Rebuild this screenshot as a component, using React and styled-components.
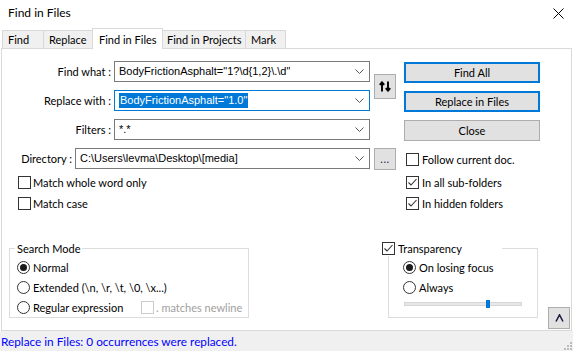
import React from 'react';
import styled, { createGlobalStyle } from 'styled-components';

const UI_FONT = `"Segoe UI", Lato, "Noto Sans", sans-serif`;
const EDIT_FONT = `"Segoe UI", "Liberation Sans", Arial, sans-serif`;

const GlobalStyle = createGlobalStyle`
  html, body { margin: 0; padding: 0; background: #fff; }
  body { font-family: ${UI_FONT}; font-size: 11px; color: #000; }
  * { box-sizing: border-box; }
`;

const Window = styled.div`
  width: 573px;
  height: 351px;
  display: flex;
  flex-direction: column;
  overflow: hidden;
  background: #fff;
`;

const TitleBar = styled.div`
  height: 28px;
  flex: none;
  display: flex;
  align-items: center;
  justify-content: space-between;
  padding: 0 9px 2px 8px;
`;

const TitleText = styled.span`
  font-size: 12px;
  line-height: 16px;
`;

const TabStrip = styled.div`
  height: 21px;
  flex: none;
  display: flex;
  align-items: flex-end;
  padding-left: 2px;
  margin-bottom: -1px;
  position: relative;
  z-index: 1;
`;

const Tab = styled.div`
  width: ${p => p.$w}px;
  height: ${p => (p.$active ? 21 : 18)}px;
  margin-bottom: ${p => (p.$active ? 0 : 1)}px;
  margin-right: -1px;
  padding-left: ${p => p.$pad}px;
  border: 1px solid #d9d9d9;
  border-bottom: none;
  background: ${p => (p.$active ? '#fff' : '#f0f0f0')};
  display: flex;
  align-items: center;
  white-space: nowrap;
  position: relative;
  z-index: ${p => (p.$active ? 1 : 0)};
`;

const Panel = styled.div`
  margin-left: 1px;
  width: 571px;
  height: 283px;
  flex: none;
  border: 1px solid #d9d9d9;
  background: #fff;
  display: flex;
  flex-direction: column;
  padding: 12px 1px 1px 7px;
`;

const TopGrid = styled.div`
  display: grid;
  grid-template-columns: 361px 26px 144px;
  grid-template-rows: repeat(4, 22px);
  row-gap: 7px;
  justify-items: end;
`;

const FormRow = styled.div`
  grid-column: 1;
  grid-row: ${p => p.$row};
  display: flex;
  justify-content: flex-end;
  align-items: flex-start;
  gap: 3px;
  justify-self: stretch;
`;

const FieldLabel = styled.label`
  line-height: 21px;
  white-space: nowrap;
`;

const Combo = styled.div`
  width: ${p => p.$w}px;
  height: 21px;
  border: 1px solid ${p => (p.$focused ? '#0078d7' : '#7a7a7a')};
  background: #fff;
  display: flex;
  align-items: center;
  justify-content: space-between;
  padding: 0 5px 0 4px;
`;

const ComboText = styled.span`
  font-family: ${EDIT_FONT};
  font-size: 11px;
  white-space: nowrap;
  overflow: hidden;
  line-height: 15px;
`;

const Selected = styled.span`
  display: inline-block;
  background: #0078d7;
  color: #fff;
  line-height: 15px;
  padding: 0 1px;
`;

const SideButton = styled.div`
  grid-column: 2;
  width: 22px;
  background: #e1e1e1;
  border: 1px solid #adadad;
  display: flex;
  align-items: center;
  justify-content: center;
`;

const SwapButton = styled(SideButton)`
  grid-row: 1 / span 2;
  align-self: center;
  height: 25px;
`;

const EllipsisButton = styled(SideButton)`
  grid-row: 4;
  align-self: start;
  height: 22px;
  line-height: 14px;
  padding-bottom: 1px;
  letter-spacing: 0.5px;
  color: #1a1a60;
`;

const ActionButton = styled.div`
  grid-column: 3;
  grid-row: ${p => p.$row};
  align-self: end;
  width: 136px;
  height: 21px;
  background: #e1e1e1;
  border: ${p => (p.$default ? '2px solid #0078d7' : '1px solid #adadad')};
  display: flex;
  align-items: center;
  justify-content: center;
  white-space: nowrap;
`;

const FollowCell = styled.div`
  grid-column: 3;
  grid-row: 4;
  align-self: center;
  justify-self: stretch;
  padding-left: 10px;
`;

const CheckArea = styled.div`
  display: grid;
  grid-template-columns: 397px 1fr;
  margin-top: 2px;
`;

const CheckColumn = styled.div`
  display: flex;
  flex-direction: column;
  padding-left: ${p => p.$pl}px;
`;

const CheckRow = styled.div`
  height: ${p => p.$h || 21}px;
  display: flex;
  align-items: center;
  gap: ${p => p.$gap ?? 3}px;
  white-space: nowrap;
  color: ${p => (p.$disabled ? '#a0a0a0' : '#000')};
  width: ${p => (p.$w ? `${p.$w}px` : 'auto')};
  flex: none;
`;

const Box = styled.span`
  width: 13px;
  height: 13px;
  flex: none;
  border: 1px solid ${p => (p.$disabled ? '#cccccc' : '#333333')};
  background: #fff;
  display: flex;
  align-items: center;
  justify-content: center;
`;

const Circle = styled.span`
  width: 13px;
  height: 13px;
  flex: none;
  border-radius: 50%;
  border: 1px solid #333333;
  background: #fff;
  display: flex;
  align-items: center;
  justify-content: center;
  &::after {
    content: '';
    display: ${p => (p.$on ? 'block' : 'none')};
    width: 7px;
    height: 7px;
    border-radius: 50%;
    background: #1a1a1a;
  }
`;

const BottomArea = styled.div`
  margin-top: auto;
  display: flex;
  align-items: flex-end;
`;

const GroupBox = styled.div`
  position: relative;
  width: ${p => p.$w}px;
  height: 70px;
  margin-left: ${p => p.$ml}px;
  margin-bottom: 11px;
  border: 1px solid #dcdcdc;
  padding: 9px 0 0 ${p => p.$pl}px;
  display: flex;
  flex-direction: column;
  gap: 1px;
`;

const GroupTitle = styled.div`
  position: absolute;
  top: -9px;
  left: ${p => p.$left}px;
  width: ${p => (p.$w ? `${p.$w}px` : 'auto')};
  height: 16px;
  padding: 0 ${p => p.$pad}px;
  background: #fff;
  display: flex;
  align-items: center;
  gap: 3px;
  white-space: nowrap;
`;

const OptionRow = styled.div`
  height: 19px;
  display: flex;
  align-items: center;
`;

const SliderRow = styled.div`
  height: 12px;
  display: flex;
  align-items: center;
  padding-left: 1px;
`;

const SliderTrack = styled.div`
  position: relative;
  width: 118px;
  height: 4px;
  background: #e7e7e7;
  border: 1px solid #d6d6d6;
`;

const SliderThumb = styled.div`
  position: absolute;
  top: -3px;
  width: 4px;
  height: 8px;
  background: #0078d7;
`;

const CollapseButton = styled.div`
  width: 22px;
  height: 22px;
  margin-left: 10px;
  background: #e1e1e1;
  border: 1px solid #adadad;
  display: flex;
  align-items: center;
  justify-content: center;
`;

const StatusBar = styled.div`
  height: 20px;
  flex: none;
  background: #f0f0f0;
  display: flex;
  align-items: center;
  justify-content: space-between;
  padding-left: 1px;
  color: #0000ff;
  font-size: 11.8px;
  white-space: nowrap;
`;

const Grip = styled.svg`
  align-self: flex-end;
  margin: 0 1px 1px 0;
`;

const Chevron = () => (
  <svg width="9" height="5" viewBox="0 0 9 5" style={{ flex: 'none' }}>
    <polyline points="0.5,0.5 4.5,4.5 8.5,0.5" fill="none" stroke="#555" strokeWidth="1" />
  </svg>
);

const Check = () => (
  <svg width="11" height="11" viewBox="0 0 11 11">
    <polyline points="1.5,5.5 4,8 9.5,2" fill="none" stroke="#333" strokeWidth="1.1" />
  </svg>
);

const Checkbox = ({ checked, disabled, label, gap }) => (
  <CheckRow $disabled={disabled} $gap={gap}>
    <Box $disabled={disabled}>{checked && <Check />}</Box>
    <span>{label}</span>
  </CheckRow>
);

const Radio = ({ on, label, width }) => (
  <CheckRow $h={19} $gap={3} $w={width}>
    <Circle $on={on} />
    <span>{label}</span>
  </CheckRow>
);

export default function App() {
  return (
    <>
      <GlobalStyle />
      <Window>
        <TitleBar>
          <TitleText>Find in Files</TitleText>
          <svg width="11" height="11" viewBox="0 0 11 11">
            <path d="M0.5 0.5 L10.5 10.5 M10.5 0.5 L0.5 10.5" stroke="#000" strokeWidth="1" />
          </svg>
        </TitleBar>

        <TabStrip>
          <Tab $w={42} $pad={5}>Find</Tab>
          <Tab $w={50} $pad={5}>Replace</Tab>
          <Tab $w={71} $pad={6} $active>Find in Files</Tab>
          <Tab $w={84} $pad={4}>Find in Projects</Tab>
          <Tab $w={41} $pad={5}>Mark</Tab>
        </TabStrip>

        <Panel>
          <TopGrid>
            <FormRow $row={1}>
              <FieldLabel>Find what :</FieldLabel>
              <Combo $w={256}>
                <ComboText>{'BodyFrictionAsphalt="1?\\d{1,2}\\.\\d"'}</ComboText>
                <Chevron />
              </Combo>
            </FormRow>
            <FormRow $row={2}>
              <FieldLabel>Replace with :</FieldLabel>
              <Combo $w={256} $focused>
                <ComboText>
                  <Selected>BodyFrictionAsphalt="1.0"</Selected>
                </ComboText>
                <Chevron />
              </Combo>
            </FormRow>
            <FormRow $row={3}>
              <FieldLabel>Filters :</FieldLabel>
              <Combo $w={256}>
                <ComboText>*.*</ComboText>
                <Chevron />
              </Combo>
            </FormRow>
            <FormRow $row={4}>
              <FieldLabel>Directory :</FieldLabel>
              <Combo $w={295}>
                <ComboText>{'C:\\Users\\levma\\Desktop\\[media]'}</ComboText>
                <Chevron />
              </Combo>
            </FormRow>

            <SwapButton>
              <svg width="12" height="11" viewBox="0 0 12 11">
                <path d="M3 10.5 V1.5 M0.8 3.8 L3 1.3 L5.2 3.8" fill="none" stroke="#000" strokeWidth="1.9" />
                <path d="M9 0.5 V9.5 M6.8 7.2 L9 9.7 L11.2 7.2" fill="none" stroke="#000" strokeWidth="1.9" />
              </svg>
            </SwapButton>
            <EllipsisButton>...</EllipsisButton>

            <ActionButton $row={1} $default>Find All</ActionButton>
            <ActionButton $row={2} $default>Replace in Files</ActionButton>
            <ActionButton $row={3}>Close</ActionButton>
            <FollowCell>
              <Checkbox label="Follow current doc." />
            </FollowCell>
          </TopGrid>

          <CheckArea>
            <CheckColumn $pl={9}>
              <Checkbox label="Match whole word only" gap={2} />
              <Checkbox label="Match case" gap={2} />
            </CheckColumn>
            <CheckColumn $pl={0}>
              <Checkbox label="In all sub-folders" checked />
              <Checkbox label="In hidden folders" checked />
            </CheckColumn>
          </CheckArea>

          <BottomArea>
            <GroupBox $w={240} $ml={0} $pl={7}>
              <GroupTitle $left={5} $pad={2}>Search Mode</GroupTitle>
              <OptionRow>
                <Radio on label="Normal" />
              </OptionRow>
              <OptionRow>
                <Radio label={'Extended (\\n, \\r, \\t, \\0, \\x...)'} />
              </OptionRow>
              <OptionRow>
                <Radio label="Regular expression" width={124} />
                <Checkbox label=". matches newline" disabled gap={2} />
              </OptionRow>
            </GroupBox>

            <GroupBox $w={150} $ml={139} $pl={14}>
              <GroupTitle $left={-7} $pad={0} $w={120}>
                <Box><Check /></Box>
                <span>Transparency</span>
              </GroupTitle>
              <OptionRow>
                <Radio on label="On losing focus" />
              </OptionRow>
              <OptionRow>
                <Radio label="Always" />
              </OptionRow>
              <SliderRow>
                <SliderTrack>
                  <SliderThumb style={{ left: 81 }} />
                </SliderTrack>
              </SliderRow>
            </GroupBox>

            <CollapseButton>
              <svg width="9" height="8" viewBox="0 0 9 8">
                <polyline points="1,7.5 4.5,0.8 8,7.5" fill="none" stroke="#1a1a40" strokeWidth="1.5" />
              </svg>
            </CollapseButton>
          </BottomArea>
        </Panel>

        <StatusBar>
          <span>Replace in Files: 0 occurrences were replaced.</span>
          <Grip width="8" height="8" viewBox="0 0 8 8">
            <rect x="6" y="0" width="2" height="2" fill="#bdbdbd" />
            <rect x="3" y="3" width="2" height="2" fill="#bdbdbd" />
            <rect x="6" y="3" width="2" height="2" fill="#bdbdbd" />
            <rect x="0" y="6" width="2" height="2" fill="#bdbdbd" />
            <rect x="3" y="6" width="2" height="2" fill="#bdbdbd" />
            <rect x="6" y="6" width="2" height="2" fill="#bdbdbd" />
          </Grip>
        </StatusBar>
      </Window>
    </>
  );
}
